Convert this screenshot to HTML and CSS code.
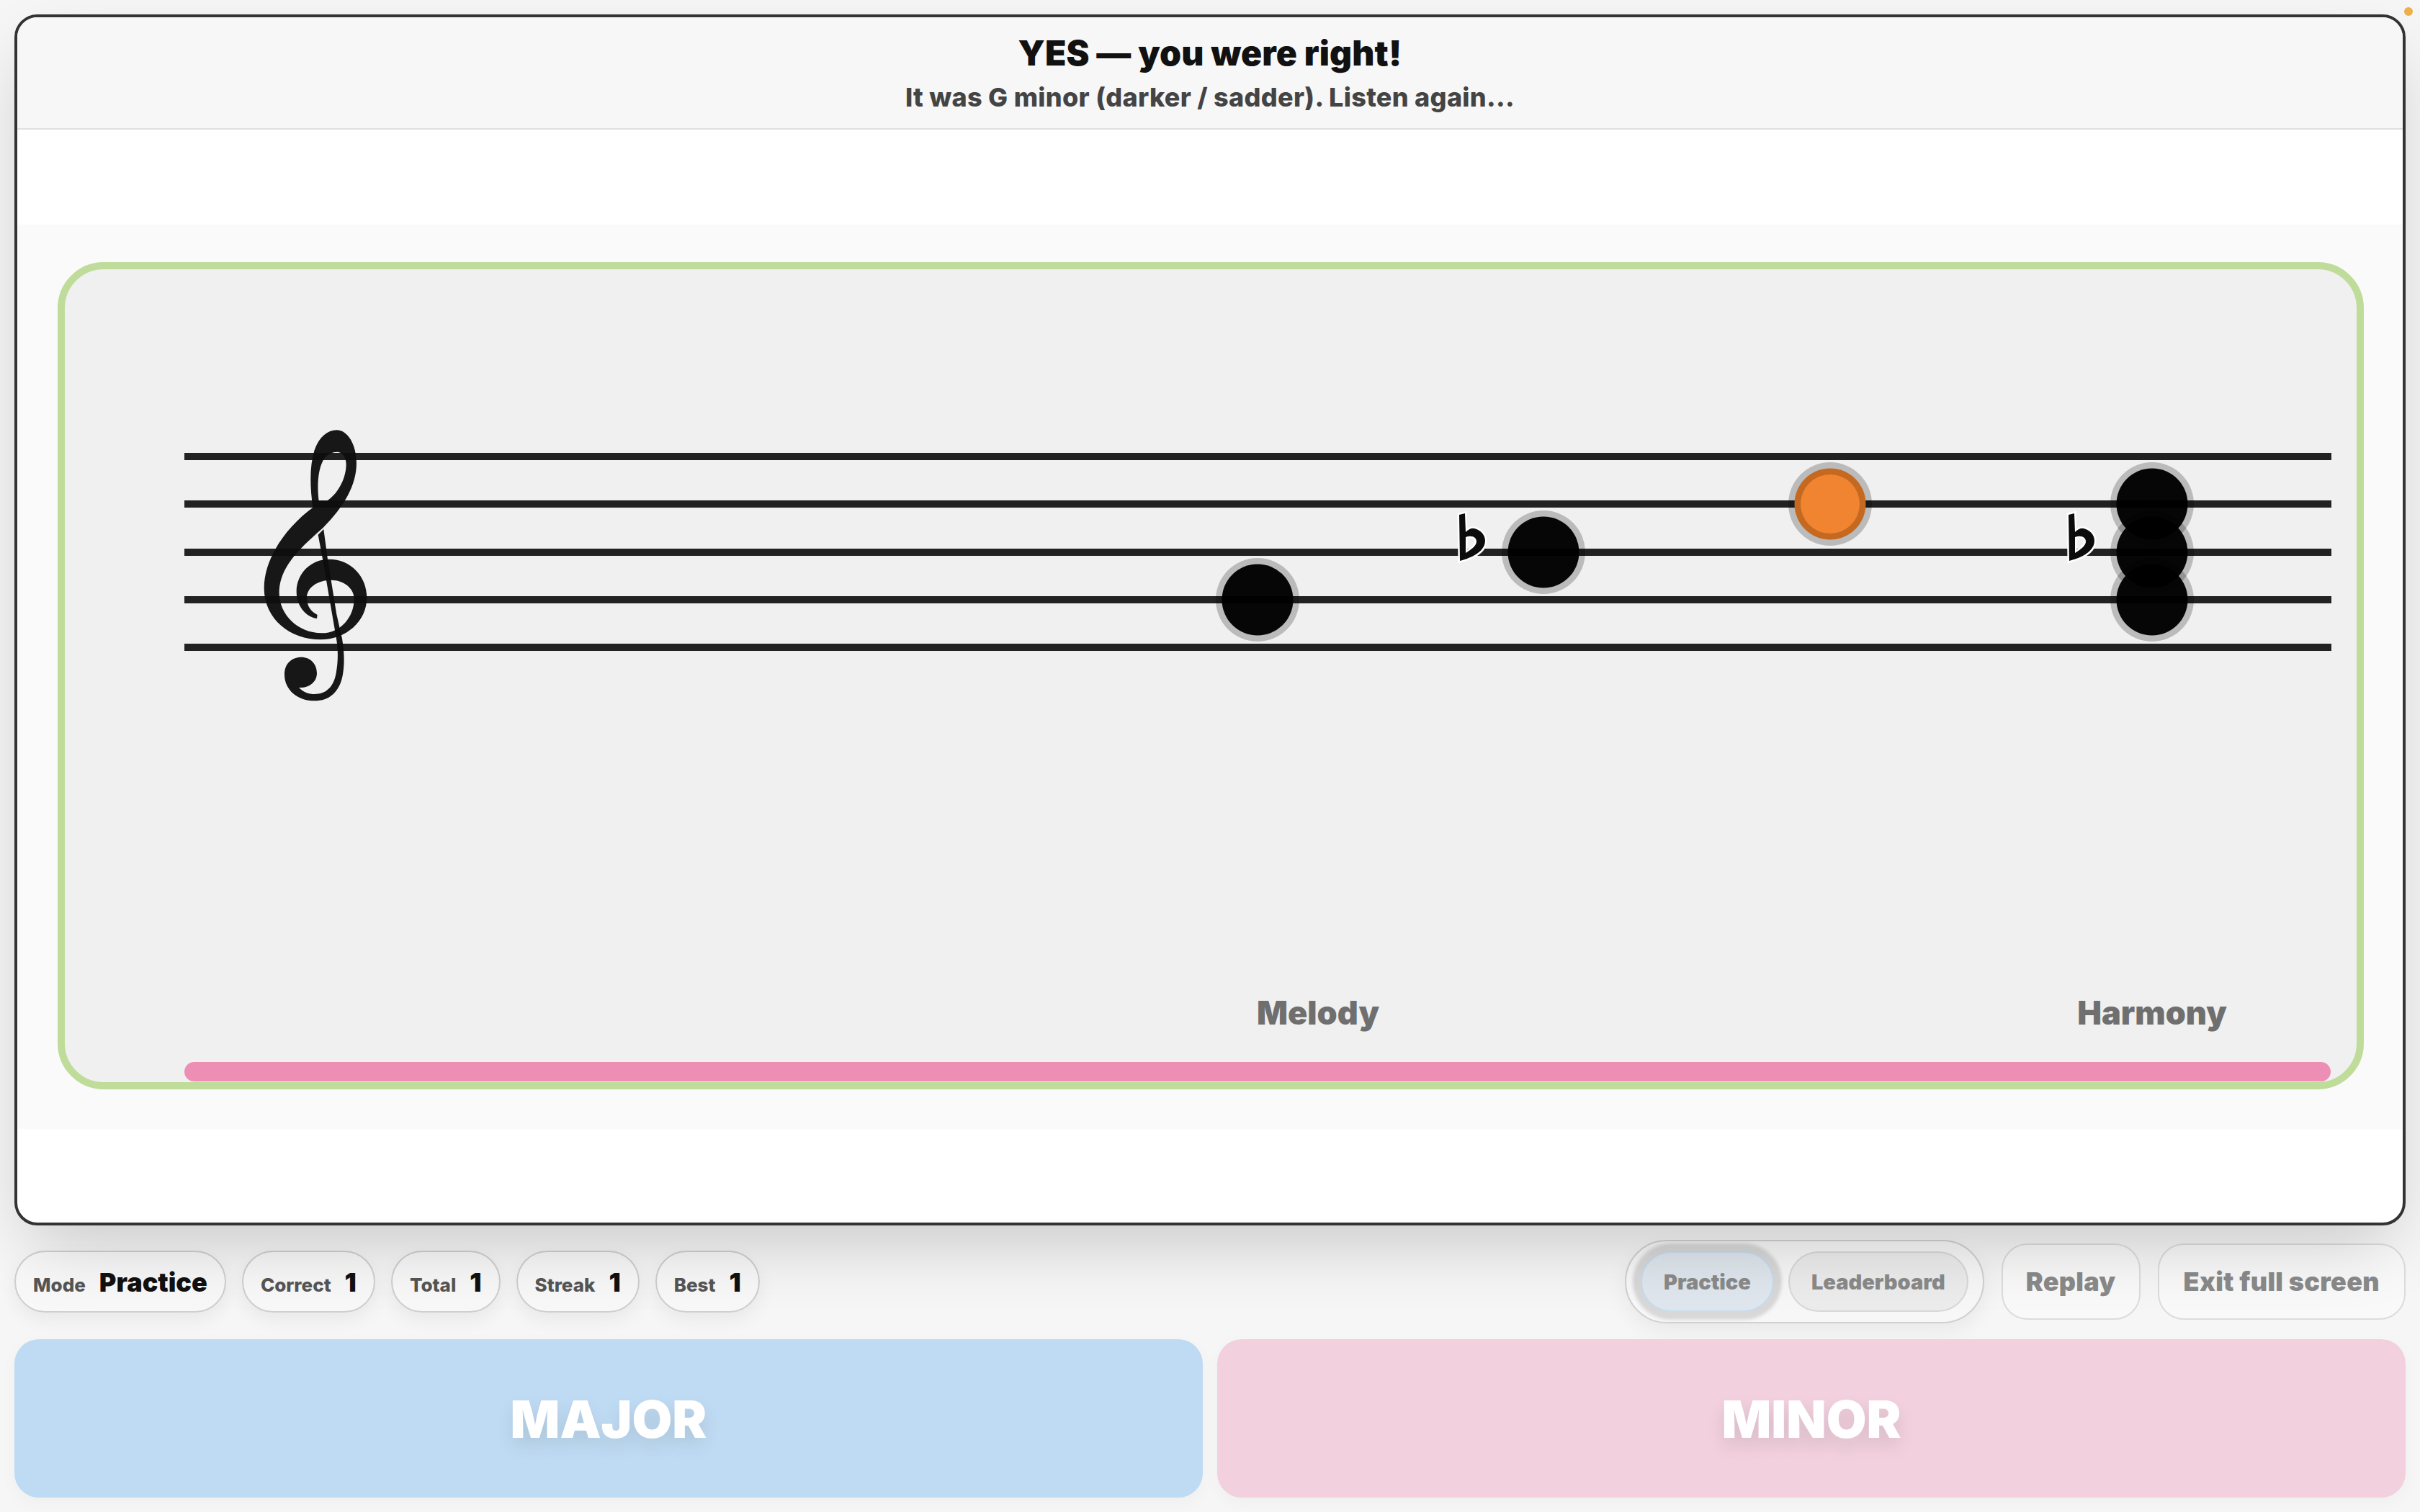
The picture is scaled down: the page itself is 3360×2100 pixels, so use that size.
FILE: index.html
```html
<!DOCTYPE html>
<html lang="en">
<head>
<meta charset="utf-8">
<title>Major or Minor</title>
<link rel="stylesheet" href="styles.css">
</head>
<body>
<span class="rec-dot"></span>
<main class="frame">
  <header class="banner">
    <h1 class="banner-title">YES — you were right!</h1>
    <p class="banner-sub">It was G minor (darker / sadder). Listen again...</p>
  </header>
  <div class="spacer-top"></div>
  <section class="stage">
    <div class="card">
      <svg class="score" viewBox="0 0 3182 1129" xmlns="http://www.w3.org/2000/svg">
        <defs>
          <path id="flat-sign" fill-rule="evenodd" d="M0 2L8 0L9 26C13 22 17 20 21 21C30 23 36 30 36 38C36 52 20 61 1 66ZM9 33L9 55C17 50 24 45 24 39C24 33 17 30 9 33Z"/>
        </defs>
        <g class="staff">
          <rect x="166" y="255" width="2981" height="10"/>
          <rect x="166" y="321" width="2981" height="10"/>
          <rect x="166" y="388" width="2981" height="10"/>
          <rect x="166" y="454" width="2981" height="10"/>
          <rect x="166" y="520" width="2981" height="10"/>
        </g>
        <g class="clef" transform="translate(150 186) scale(0.3333)">
          <path fill-rule="evenodd" d="M682 112C730 112 765 175 765 250C765 340 715 430 625 520C535 600 443 680 443 790C443 880 520 958 620 958C700 958 755 890 755 815C755 770 710 737 660 737C600 737 558 770 558 810C558 850 580 870 602 882L600 897C550 890 515 840 515 785C515 710 575 650 650 650C740 650 808 720 808 810C808 910 720 985 615 985C490 985 380 900 380 770C380 640 480 510 583 435C570 340 570 260 590 195C610 140 645 112 682 112ZM608 408C600 340 605 280 625 240C640 212 665 203 685 203C710 205 722 230 722 255C722 320 680 385 640 408Z"/>
          <path d="M605 548L628 525L645 650L682 880L705 980C715 1040 715 1090 708 1130C695 1205 650 1240 590 1240C520 1240 465 1195 465 1130C465 1085 495 1058 535 1058C572 1058 600 1085 600 1125C600 1160 570 1187 525 1185C545 1205 565 1212 590 1212C640 1212 670 1180 680 1125C688 1080 690 1030 680 975L655 830L625 655Z"/>
        </g>
        <g class="note"><circle class="halo" cx="1656" cy="459" r="58"/><circle class="head" cx="1656" cy="459" r="49.5"/></g>
        <use class="flat" href="#flat-sign" x="1936" y="339"/>
        <g class="note"><circle class="halo" cx="2053" cy="393" r="58"/><circle class="head" cx="2053" cy="393" r="49.5"/></g>
        <g class="note"><circle class="halo" cx="2451" cy="326" r="58"/><circle class="head-on" cx="2451" cy="326" r="49.5"/><circle class="head-core" cx="2451" cy="326" r="41"/></g>
        <use class="flat" href="#flat-sign" x="2782" y="339"/>
        <g class="note"><circle class="halo" cx="2898" cy="326" r="58"/><circle class="head" cx="2898" cy="326" r="49.5"/></g>
        <g class="note"><circle class="halo" cx="2898" cy="393" r="58"/><circle class="head" cx="2898" cy="393" r="49.5"/></g>
        <g class="note"><circle class="halo" cx="2898" cy="459" r="58"/><circle class="head" cx="2898" cy="459" r="49.5"/></g>
        <text class="part-label" x="1740" y="1049" text-anchor="middle">Melody</text>
        <text class="part-label" x="2898" y="1049" text-anchor="middle">Harmony</text>
      </svg>
      <div class="progress"></div>
    </div>
  </section>
  <div class="spacer-bottom"></div>
</main>
<div class="toolbar">
  <div class="stats">
    <div class="pill"><span class="pill-label">Mode</span><span class="pill-value">Practice</span></div>
    <div class="pill"><span class="pill-label">Correct</span><span class="pill-value">1</span></div>
    <div class="pill"><span class="pill-label">Total</span><span class="pill-value">1</span></div>
    <div class="pill"><span class="pill-label">Streak</span><span class="pill-value">1</span></div>
    <div class="pill"><span class="pill-label">Best</span><span class="pill-value">1</span></div>
  </div>
  <div class="actions">
    <div class="segment">
      <button class="seg-btn seg-btn-active" type="button">Practice</button>
      <button class="seg-btn" type="button">Leaderboard</button>
    </div>
    <button class="ghost-btn ghost-btn-compact" type="button">Replay</button>
    <button class="ghost-btn" type="button">Exit full screen</button>
  </div>
</div>
<div class="answers">
  <button class="answer answer-major" type="button">MAJOR</button>
  <button class="answer answer-minor" type="button">MINOR</button>
</div>
</body>
</html>
```
FILE: styles.css
```css
* { box-sizing: border-box; }
html, body { margin: 0; height: 100%; }
body {
  width: 3360px;
  height: 2100px;
  padding: 20px;
  background: #f6f6f6;
  font-family: Inter, "Liberation Sans", sans-serif;
  display: flex;
  flex-direction: column;
  position: relative;
  overflow: hidden;
}
.rec-dot {
  position: absolute;
  left: 3338px;
  top: 10px;
  width: 12px;
  height: 12px;
  border-radius: 50%;
  background: #eeb04a;
}
.frame {
  position: relative;
  z-index: 1;
  height: 1682px;
  border: 4px solid #333;
  border-radius: 32px;
  background: #fff;
  box-shadow: 0 40px 100px -20px rgba(0, 0, 0, 0.2);
  display: flex;
  flex-direction: column;
  flex: none;
}
.banner {
  height: 156px;
  background: #f7f7f7;
  border-bottom: 2px solid #e0e0e0;
  border-radius: 28px 28px 0 0;
  display: flex;
  flex-direction: column;
  align-items: center;
  padding-top: 21px;
}
.banner-title {
  margin: 0;
  font-size: 48px;
  line-height: 58px;
  font-weight: 900;
  letter-spacing: 0.15px;
  color: #111;
}
.banner-sub {
  margin: 9px 0 0;
  font-size: 36px;
  line-height: 46px;
  font-weight: 800;
  letter-spacing: 0.3px;
  color: #444;
}
.spacer-top { height: 132px; flex: none; }
.spacer-bottom { flex: 1; }
.stage {
  height: 1256px;
  flex: none;
  background: #fafafa;
  padding: 52px 54px 55px 56px;
}
.card {
  position: relative;
  height: 100%;
  border: 10px solid #bfdc9a;
  border-radius: 64px;
  background: #f0f0f0;
}
.score { display: block; width: 100%; height: 100%; overflow: visible; }
.staff rect { fill: #222; }
.clef path { fill: #0e0e0e; fill-opacity: 0.96; }
.halo { fill: rgba(0, 0, 0, 0.22); }
.head { fill: #000; fill-opacity: 0.97; }
.head-on { fill: #c4691f; }
.head-core { fill: #f18431; }
.flat {
  fill: #0c0c0c;
  stroke: #fff;
  stroke-width: 5px;
  paint-order: stroke;
}
.part-label {
  font-family: Inter, "Liberation Sans", sans-serif;
  font-size: 45px;
  font-weight: 900;
  fill: #6f6f6f;
}
.progress {
  position: absolute;
  left: 166px;
  right: 36px;
  bottom: 1px;
  height: 27px;
  border-radius: 14px;
  background: #ed8fb5;
}
.toolbar {
  margin-top: 20px;
  height: 116px;
  flex: none;
  display: flex;
  justify-content: space-between;
  align-items: center;
}
.stats { display: flex; gap: 22px; }
.pill {
  height: 86px;
  padding: 0 24px;
  border: 2px solid #cfcfcf;
  border-radius: 43px;
  background: rgba(255, 255, 255, 0.22);
  box-shadow: 0 10px 26px rgba(0, 0, 0, 0.06);
  display: flex;
  align-items: baseline;
  gap: 19px;
  line-height: 84px;
}
.pill-label { font-size: 26px; font-weight: 800; color: #555; }
.pill-value { font-size: 36px; font-weight: 900; color: #111; }
.actions { display: flex; align-items: center; gap: 24px; }
.segment {
  height: 116px;
  padding: 0 20px;
  border: 2px solid #d0d0d0;
  border-radius: 58px;
  background: rgba(255, 255, 255, 0.2);
  box-shadow: 0 10px 30px rgba(0, 0, 0, 0.06);
  display: flex;
  align-items: center;
  gap: 20px;
}
.seg-btn {
  height: 84px;
  padding: 0 30px;
  border: 2px solid #d8d8d8;
  border-radius: 42px;
  background: #ececec;
  font-family: inherit;
  font-size: 29px;
  font-weight: 900;
  color: #8a8a8a;
}
.seg-btn-active {
  background: #dfe6ed;
  border-color: #c6dcf0;
  box-shadow: 0 0 4px 11px #d8d8d8;
}
.ghost-btn {
  height: 106px;
  padding: 0 34px;
  border: 2px solid #dcdcdc;
  border-radius: 36px;
  background: rgba(255, 255, 255, 0.4);
  font-family: inherit;
  font-size: 36px;
  font-weight: 900;
  letter-spacing: 0.3px;
  color: #8a8a8a;
}
.ghost-btn-compact { padding: 0 32px; }
.answers {
  margin-top: 22px;
  height: 220px;
  flex: none;
  display: grid;
  grid-template-columns: 1fr 1fr;
  gap: 20px;
}
.answer {
  border: 0;
  border-radius: 34px;
  font-family: inherit;
  font-size: 72px;
  font-weight: 900;
  color: #fff;
  text-shadow: 0 12px 24px rgba(0, 0, 0, 0.1);
  box-shadow: 0 8px 24px rgba(0, 0, 0, 0.03);
}
.answer-major { background: #bfdbf3; }
.answer-minor { background: #f2d0de; }
```
